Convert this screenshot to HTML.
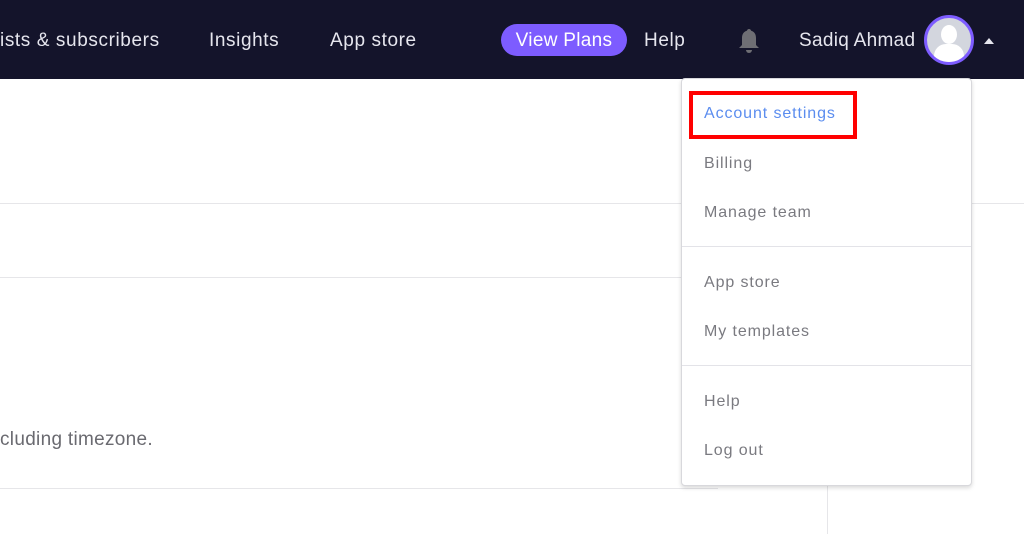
<!DOCTYPE html>
<html><head><style>
body{margin:0;width:1024px;height:534px;overflow:hidden;background:#fff;font-family:"Liberation Sans",sans-serif;position:relative}
.nav{position:absolute;left:0;top:0;width:1024px;height:79px;background:#14142b}
.nav span{position:absolute;top:30px;color:#e6e6ee;font-size:19px;letter-spacing:0.6px}
.vp{position:absolute;left:501px;top:24px;width:126px;height:32px;border-radius:16px;background:#7d5cff;color:#fff;font-size:19px;text-align:center;line-height:33px;letter-spacing:0.3px}
.line{position:absolute;height:1px;background:#e6e6e9}
.dd{position:absolute;left:681px;top:78px;width:289px;height:406px;background:#fff;border:1px solid #d8d8dc;border-radius:4px;box-shadow:0 2px 4px rgba(0,0,0,.15)}
.dd div.i{position:absolute;left:22px;font-size:16px;color:#7a7a80;letter-spacing:0.9px}
.dd hr{position:absolute;left:0;width:289px;margin:0;border:0;height:1px;background:#e3e3e8}
</style></head><body>
<div class="nav">
<span style="left:0">ists &amp; subscribers</span>
<span style="left:209px">Insights</span>
<span style="left:330px">App store</span>
<div class="vp">View Plans</div>
<span style="left:644px">Help</span>
<svg style="position:absolute;left:737px;top:27px" width="24" height="28" viewBox="0 0 24 28"><path d="M12 2c1 0 2 .7 2 1.6C17.5 4.6 19 7.5 19 11v7l3 3H2l3-3v-7c0-3.5 1.5-6.4 5-7.4C10 2.7 11 2 12 2z" fill="#6e6e74"/><path d="M9 23h6a3 3 0 0 1-6 0z" fill="#6e6e74"/></svg>
<span style="left:799px;letter-spacing:0.3px">Sadiq Ahmad</span>
<div style="position:absolute;left:924px;top:15px;width:44px;height:44px;border-radius:50%;background:#d3d6de;border:3px solid #7d5cff;overflow:hidden">
<div style="position:absolute;left:14px;top:7px;width:16px;height:19px;border-radius:50%;background:#fff"></div>
<div style="position:absolute;left:7px;top:26px;width:30px;height:22px;border-radius:12px 12px 0 0;background:#fff"></div></div>
<div style="position:absolute;left:984px;top:38px;width:0;height:0;border-left:5px solid transparent;border-right:5px solid transparent;border-bottom:6px solid #e6e6ee"></div>
</div>
<div class="line" style="left:0;top:203px;width:1024px"></div>
<div class="line" style="left:0;top:277px;width:690px"></div>
<div class="line" style="left:0;top:488px;width:718px"></div>
<div style="position:absolute;left:827px;top:485px;width:1px;height:49px;background:#e6e6e9"></div>
<div style="position:absolute;left:0;top:429px;font-size:19px;color:#6a6a70;letter-spacing:0.3px">cluding timezone.</div>
<div class="dd">
<div style="position:absolute;left:7px;top:12px;width:168px;height:48px;border:4px solid #f00;box-sizing:border-box"></div>
<div class="i" style="top:26px;color:#5b8def">Account settings</div>
<div class="i" style="top:76px">Billing</div>
<div class="i" style="top:125px">Manage team</div>
<hr style="top:167px">
<div class="i" style="top:195px">App store</div>
<div class="i" style="top:244px">My templates</div>
<hr style="top:286px">
<div class="i" style="top:314px">Help</div>
<div class="i" style="top:363px">Log out</div>
</div>
</body></html>
